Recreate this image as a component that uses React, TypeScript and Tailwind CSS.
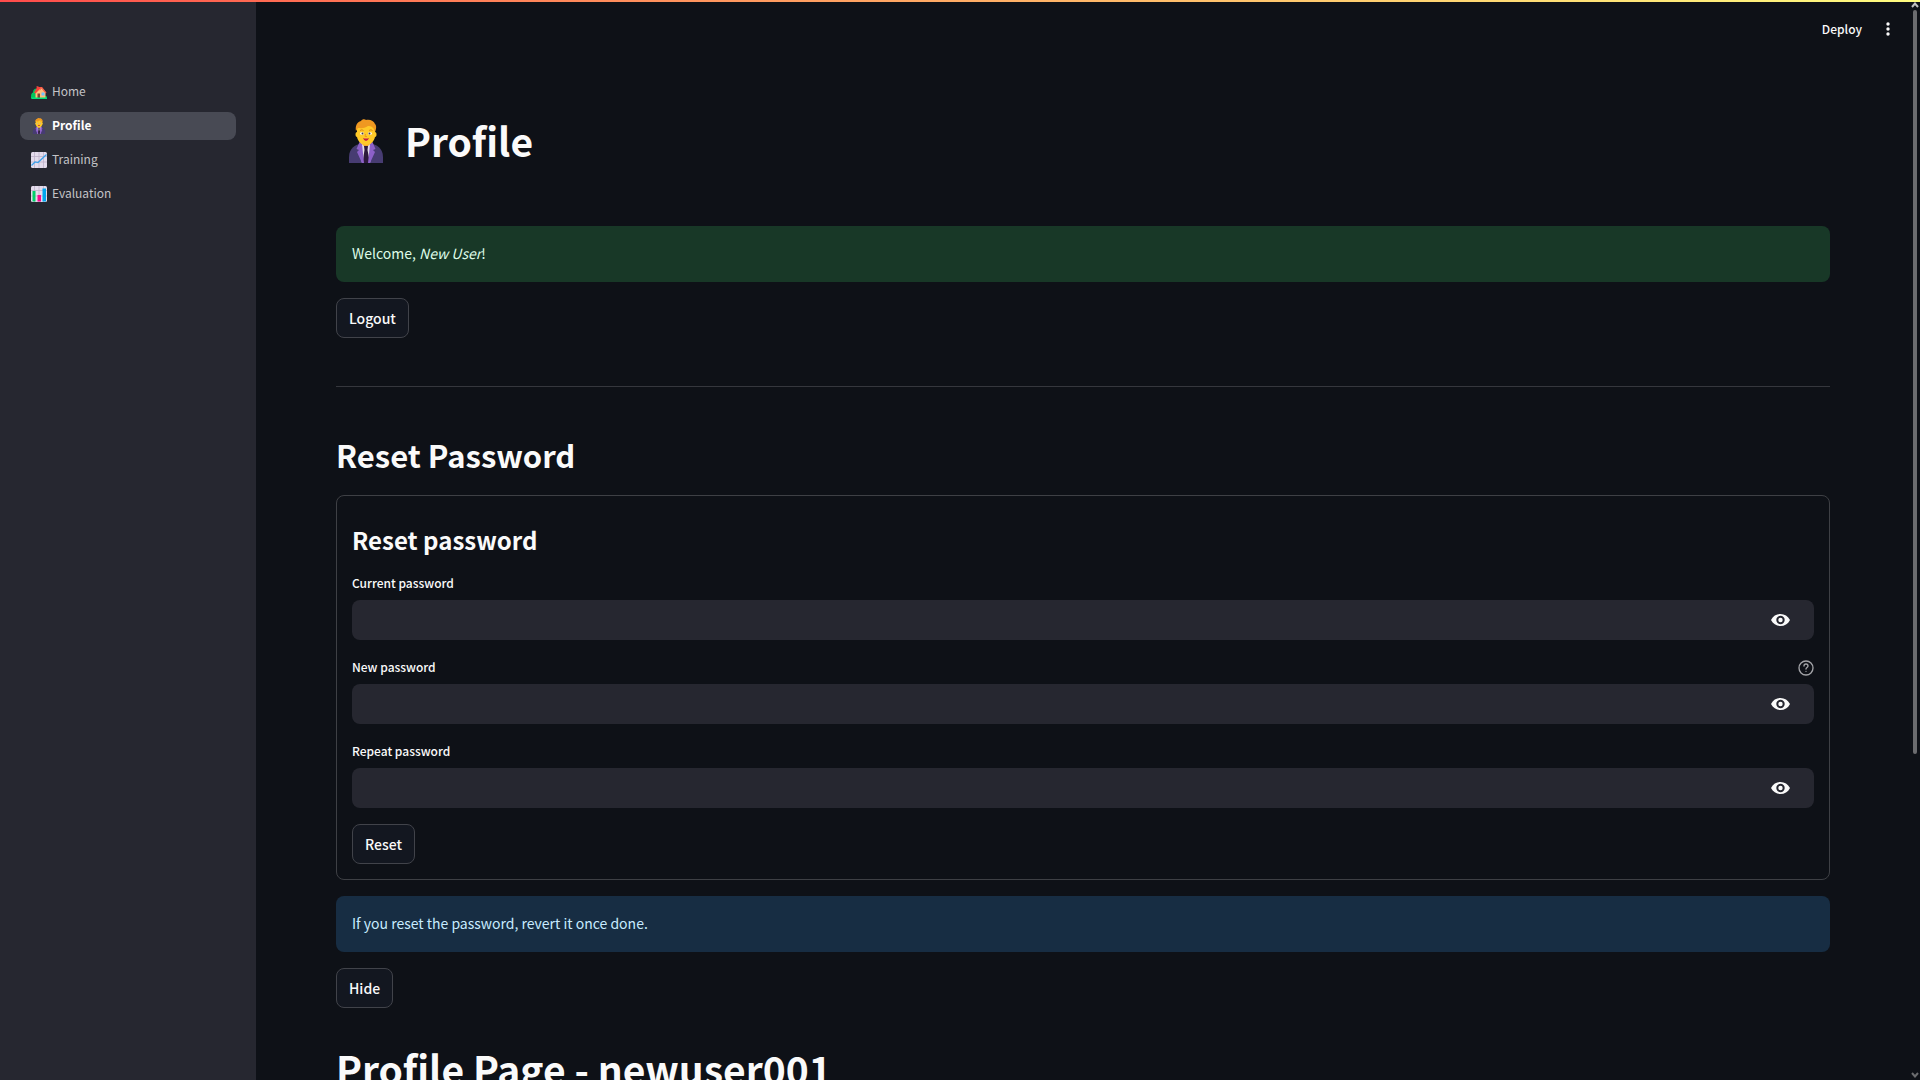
import type { ReactNode } from 'react';

function HouseIcon() {
  return (
    <svg viewBox="0 0 32 32" className="size-4 shrink-0" aria-hidden="true">
      <path d="M0 26C0 21 1 18 4 17C4 12 7 9 11 9V28H0Z" fill="#00c45c" />
      <path d="M27 28C27 22 32 22 32 28Z" fill="#00c45c" />
      <path d="M11 4H15V10H11Z" fill="#b4453c" />
      <path d="M9 17L13 7H22L29 17V28H9Z" fill="#ffbf7a" />
      <path d="M6 17L13 6H22L20 8L9 19Z" fill="#f8403a" />
      <path d="M19 6H22L31 17L29 19L21 9L17 14Z" fill="#f8604a" />
      <path d="M13 19H18V28H13Z" fill="#7d4533" />
      <path d="M21 17H27V23H21Z" fill="#6fc4ff" />
      <path d="M0 27H32V30H1Z" fill="#00e077" />
    </svg>
  );
}

function PersonIcon({ className }: { className: string }) {
  return (
    <svg viewBox="0 0 44 44" className={className} aria-hidden="true">
      <path d="M5 44V38C5 29 12 25 17 25H27C32 25 39 29 39 38V44Z" fill="#473c72" />
      <path d="M17 20H27V28L22 32L17 28Z" fill="#f5a82b" />
      <path d="M17 24L22 29L27 24L29 29L26 44H18L15 29Z" fill="#e5dde9" />
      <path d="M20 27H24L23.5 31L26 44H18.5L20.5 31Z" fill="#2d193c" />
      <path d="M15.5 23L18 25L20 44H18L13 33L15 31L12.5 30Z" fill="#8c60c8" />
      <path d="M28.5 23L26 25L24 44H26L31 33L29 31L31.5 30Z" fill="#8c60c8" />
      <path d="M13 10C13 4 17 2 22 2S31 5 31 10V13C33 13 33 18 31 18C30 23 26 26 22 26S14 23 13 18C11 18 11 13 13 13Z" fill="#ffc928" />
      <path d="M12 12C11 7 13 3 17 2C18 0 21 0 22 1C26 0 30 2 31 5C33 7 32 11 31 13C30 8 27 7 24 7C20 10 16 9 14 9Z" fill="#ef9821" />
      <path d="M16 11.5Q18 10 19.5 11.5M25 11.5Q27 10 28.5 11.5" fill="none" stroke="#dc861b" />
      <ellipse cx="18" cy="14.5" rx="2" ry="1.2" fill="#fff" />
      <ellipse cx="26" cy="14.5" rx="2" ry="1.2" fill="#fff" />
      <circle cx="18.5" cy="14.5" r="1" fill="#4b3a46" />
      <circle cx="25.5" cy="14.5" r="1" fill="#4b3a46" />
      <path d="M21.5 15L21 17.5H23" fill="none" stroke="#ef9821" />
      <path d="M19 19Q22 20 25 19Q24 22 22 22T19 19Z" fill="#c51f44" />
    </svg>
  );
}

function ChartPaper({ children }: { children: ReactNode }) {
  return (
    <svg viewBox="0 0 32 32" className="size-4 shrink-0" aria-hidden="true">
      <rect width="32" height="32" rx="3" fill="#e4dcec" />
      <path d="M7 0V32M16 0V32M25 0V32M0 9H32M0 20H32" stroke="#bcafc8" strokeWidth="1.5" />
      {children}
    </svg>
  );
}

function LineChartIcon() {
  return (
    <ChartPaper>
      <path d="M1 27L8 20L14 21L31 5" fill="none" stroke="#3aa0ea" strokeWidth="2.5" />
    </ChartPaper>
  );
}

function BarChartIcon() {
  return (
    <ChartPaper>
      <path d="M3 10H9V31H3Z" fill="#00cf6a" />
      <path d="M13 18H20V31H13Z" fill="#f70a8d" />
      <path d="M23 5H30V31H23Z" fill="#00a6ed" />
    </ChartPaper>
  );
}

function EyeIcon() {
  return (
    <svg viewBox="0 0 19 12" className="h-3 w-[19px]" aria-hidden="true">
      <path
        fillRule="evenodd"
        fill="currentColor"
        d="M0 6C2 2 5.5 0 9.5 0S17 2 19 6C17 10 13.5 12 9.5 12S2 10 0 6ZM9.5 1.8A4.2 4.2 0 1 0 9.5 10.2A4.2 4.2 0 1 0 9.5 1.8ZM9.5 3.8A2.2 2.2 0 1 1 9.5 8.2A2.2 2.2 0 1 1 9.5 3.8Z"
      />
    </svg>
  );
}

function HelpIcon() {
  return (
    <svg viewBox="0 0 24 24" className="size-4" fill="none" stroke="currentColor" strokeWidth="2" strokeLinecap="round" aria-hidden="true">
      <circle cx="12" cy="12" r="10.5" />
      <path d="M9 9a3 3 0 0 1 6 0c0 2-3 2.5-3 4.5M12 17h.01" />
    </svg>
  );
}

const pages = [
  { name: 'Home', icon: <HouseIcon /> },
  { name: 'Profile', icon: <PersonIcon className="size-4 shrink-0" />, active: true },
  { name: 'Training', icon: <LineChartIcon /> },
  { name: 'Evaluation', icon: <BarChartIcon /> },
];

function Sidebar() {
  return (
    <aside className="w-64 shrink-0 bg-[#262730] px-5 pt-[78px]">
      <nav className="flex flex-col gap-1.5">
        {pages.map((page) => (
          <a
            key={page.name}
            href="#"
            aria-current={page.active ? 'page' : undefined}
            className={
              page.active
                ? 'flex h-7 items-center gap-[5px] rounded-lg bg-[#484a54] px-[11px] text-[12px] font-bold text-white'
                : 'flex h-7 items-center gap-[5px] rounded-lg px-[11px] text-[12px] text-[#c3c3c6]'
            }
          >
            {page.icon}
            <span className="pb-0.5">{page.name}</span>
          </a>
        ))}
      </nav>
    </aside>
  );
}

function Button({ children }: { children: ReactNode }) {
  return (
    <button type="button" className="flex h-10 items-center self-start rounded-lg border border-[#41434a] bg-[#131720] px-3 text-[14px] font-medium">
      {children}
    </button>
  );
}

function PasswordField({ id, label, help }: { id: string; label: string; help?: boolean }) {
  return (
    <div>
      <div className="flex h-7 items-start justify-between">
        <label htmlFor={id} className="text-[12px] font-medium leading-[22px]">
          {label}
        </label>
        {help && (
          <button type="button" aria-label={`Help for ${label}`} className="mt-1 text-[#a3a4a8]">
            <HelpIcon />
          </button>
        )}
      </div>
      <div className="flex h-10 items-center rounded-lg bg-[#262730]">
        <input id={id} type="password" className="h-full min-w-0 flex-1 bg-transparent px-3 outline-none" />
        <button type="button" aria-label={`Show ${label}`} className="px-6">
          <EyeIcon />
        </button>
      </div>
    </div>
  );
}

export default function App() {
  return (
    <div className="relative flex h-screen overflow-hidden bg-[#0e1117] font-['Noto_Sans_CJK_SC','Source_Sans_3',sans-serif] text-[#fafafa]">
      <Sidebar />
      <div className="flex min-w-0 flex-1 flex-col overflow-hidden">
        <header className="flex h-[58px] shrink-0 items-center justify-end pr-5">
          <button type="button" className="text-[12px] font-medium leading-6">
            Deploy
          </button>
          <button type="button" aria-label="Main menu" className="ml-6">
            <svg viewBox="0 0 4 14" className="h-3.5 w-1" fill="currentColor" aria-hidden="true">
              <circle cx="2" cy="2" r="1.7" />
              <circle cx="2" cy="7" r="1.7" />
              <circle cx="2" cy="12" r="1.7" />
            </svg>
          </button>
        </header>
        <main className="px-20">
          <h1 className="flex h-[168px] items-start gap-[17px] pl-2 pt-14 text-[39px] font-bold leading-[52px]">
            <PersonIcon className="mt-[5px] size-11" />
            Profile
          </h1>
          <div className="flex flex-col gap-4">
            <p className="rounded-lg bg-[#183827] px-4 pb-[17px] pt-[15px] text-[14px] leading-6 text-[#dffde9]">
              Welcome, <em>New User</em>!
            </p>
            <Button>Logout</Button>
          </div>
          <hr className="mb-[47px] mt-12 border-[#35373d]" />
          <h2 className="mb-5 text-[31px] font-semibold leading-[41px]">Reset Password</h2>
          <div className="flex flex-col gap-4">
            <form className="flex flex-col gap-4 rounded-lg border border-[#3e4045] p-[15px]">
              <h3 className="pt-3 text-[24px] font-semibold leading-[33px]">Reset password</h3>
              <PasswordField id="current-password" label="Current password" />
              <PasswordField id="new-password" label="New password" help />
              <PasswordField id="repeat-password" label="Repeat password" />
              <Button>Reset</Button>
            </form>
            <p className="rounded-lg bg-[#172d43] px-4 pb-[17px] pt-[15px] text-[14px] leading-6 text-[#c7ebff]">
              If you reset the password, revert it once done.
            </p>
            <Button>Hide</Button>
            <h1 className="pt-[18px] text-[39px] font-bold leading-[52px]">Profile Page - newuser001</h1>
          </div>
        </main>
      </div>
      <div className="flex w-2.5 shrink-0 flex-col items-center pt-0.5" aria-hidden="true">
        <svg viewBox="0 0 8 6" className="h-1.5 w-2">
          <path d="M1 5L4 1.5L7 5" fill="none" stroke="#c0c0c0" strokeWidth="2" />
        </svg>
        <div className="mt-0.5 h-[69%] w-1 rounded-full bg-[#6b6c6f]" />
        <svg viewBox="0 0 8 6" className="mb-0.5 mt-auto h-1.5 w-2">
          <path d="M1 1L4 4.5L7 1" fill="none" stroke="#6b6c6f" strokeWidth="2" />
        </svg>
      </div>
      <div className="absolute inset-x-0 top-0 h-0.5 bg-linear-to-r from-[#ff4b4b] to-[#fffd80]" />
    </div>
  );
}
